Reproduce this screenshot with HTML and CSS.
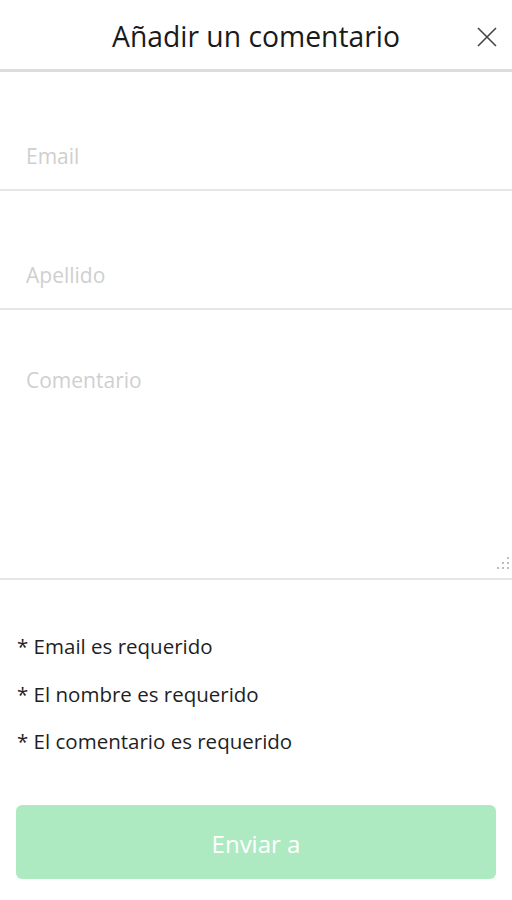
FILE: index.html
```html
<!DOCTYPE html>
<html lang="es">
<head>
  <meta charset="UTF-8" />
  <meta name="viewport" content="width=device-width, initial-scale=1.0"/>
  <title>Añadir un comentario</title>
  <link rel="stylesheet" href="styles.css">
</head>
<body>

  <div class="sheet">
    <div class="sheet-header">
      <h2 class="sheet-title">Añadir un comentario</h2>
      <button class="close-button" aria-label="Cerrar">
        <svg class="close-icon" viewBox="0 0 20 20">
          <path d="M1 1l18 18M19 1L1 19"></path>
        </svg>
      </button>
    </div>

    <form class="comment-form" onsubmit="return false">
      <div class="field">
        <input class="field-input" type="email" placeholder="Email">
      </div>
      <div class="field">
        <input class="field-input" type="text" placeholder="Apellido">
      </div>
      <div class="field field-area">
        <textarea class="field-textarea" placeholder="Comentario"></textarea>
        <svg class="resize-grip" viewBox="0 0 14 14">
          <rect x="11" y="1" width="2" height="2"></rect>
          <rect x="6" y="6" width="2" height="2"></rect>
          <rect x="11" y="6" width="2" height="2"></rect>
          <rect x="1" y="11" width="2" height="2"></rect>
          <rect x="6" y="11" width="2" height="2"></rect>
          <rect x="11" y="11" width="2" height="2"></rect>
        </svg>
      </div>

      <ul class="errors">
        <li>* Email es requerido</li>
        <li>* El nombre es requerido</li>
        <li>* El comentario es requerido</li>
      </ul>

      <div class="actions">
        <button class="submit-button" type="submit" disabled>Enviar a</button>
      </div>
    </form>
  </div>

</body>
</html>
```

FILE: styles.css
```css
/* Reset & Base Styles */
* {
  margin: 0;
  padding: 0;
  box-sizing: border-box;
}

body {
  font-family: "Open Sans", "Noto Sans", sans-serif;
  background: white;
  color: #222;
}

.sheet {
  width: 512px;
  min-height: 900px;
}

.sheet-header {
  height: 72px;
  display: flex;
  align-items: center;
  justify-content: center;
  position: relative;
  border-bottom: 3px solid #dddddd;
}

.sheet-title {
  font-size: 28.3px;
  font-weight: 400;
  color: #1a1a1a;
  margin-top: 2px;
}

.close-button {
  position: absolute;
  right: 15px;
  top: 27px;
  width: 20px;
  height: 20px;
  background: none;
  border: none;
  cursor: pointer;
}

.close-icon {
  display: block;
  width: 20px;
  height: 20px;
  stroke: #444;
  stroke-width: 1.6;
  fill: none;
}

.field {
  border-bottom: 2px solid #e6e6e6;
}

.field-area {
  position: relative;
}

.field-input {
  display: block;
  width: 100%;
  height: 66px;
  margin-top: 51px;
  padding: 0 26px;
  border: none;
  outline: none;
  font-family: inherit;
  font-size: 21px;
  color: #333;
  background: transparent;
}

.field-textarea {
  display: block;
  width: 100%;
  height: 268px;
  padding: 56px 26px 0;
  border: none;
  outline: none;
  resize: none;
  font-family: inherit;
  font-size: 21px;
  color: #333;
  background: transparent;
}

.field-input::placeholder,
.field-textarea::placeholder {
  color: #cfcfcf;
}

.resize-grip {
  position: absolute;
  right: 2px;
  bottom: 8px;
  width: 14px;
  height: 14px;
  fill: #bdbdbd;
}

.errors {
  list-style: none;
  padding: 43px 17px 0;
}

.errors li {
  font-size: 20.5px;
  line-height: 47.5px;
  color: #1f1f1f;
}

.actions {
  padding: 39px 16px 0;
}

.submit-button {
  display: block;
  width: 100%;
  height: 74px;
  padding-top: 4px;
  border: none;
  border-radius: 6px;
  background-color: #aeeac1;
  color: white;
  font-family: inherit;
  font-size: 24px;
}
```
